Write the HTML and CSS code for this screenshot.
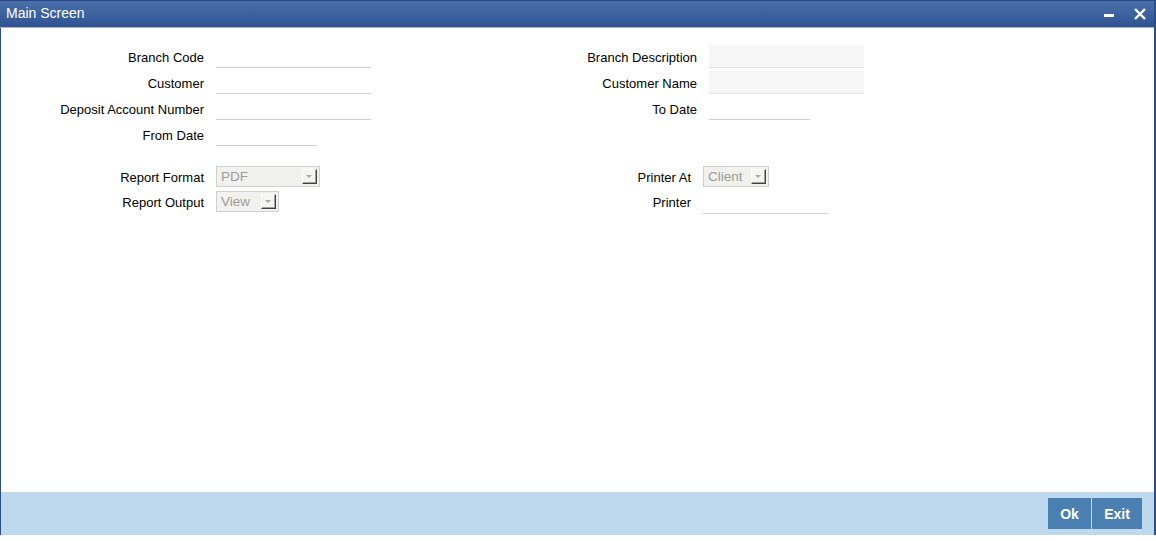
FILE: index.html
```html
<!DOCTYPE html>
<html lang="en">
<head>
    <meta charset="UTF-8">
    <title>Main Screen</title>
    <link rel="stylesheet" href="styles.css">
</head>
<body>

<div class="window">
    <div class="titlebar">
        <span class="title">Main Screen</span>
        <div class="win-buttons">
            <span class="minimize"></span>
            <svg class="close" width="12" height="12" viewBox="0 0 12 12">
                <path d="M1 1 L11 11 M11 1 L1 11" stroke="#fff" stroke-width="2.4"/>
            </svg>
        </div>
    </div>

    <div class="content">
        <div class="form-top">
            <label>Branch Code</label>
            <div class="field"><input type="text" class="text-input"></div>
            <label>Branch Description</label>
            <div class="field"><input type="text" class="text-input readonly" readonly></div>

            <label>Customer</label>
            <div class="field"><input type="text" class="text-input"></div>
            <label>Customer Name</label>
            <div class="field"><input type="text" class="text-input readonly" readonly></div>

            <label>Deposit Account Number</label>
            <div class="field"><input type="text" class="text-input"></div>
            <label>To Date</label>
            <div class="field"><input type="text" class="text-input date"></div>

            <label>From Date</label>
            <div class="field"><input type="text" class="text-input date"></div>
            <span></span>
            <span></span>
        </div>

        <div class="form-bottom">
            <label>Report Format</label>
            <div class="field">
                <div class="select wide"><span>PDF</span><span class="arrow"></span></div>
            </div>
            <label>Printer At</label>
            <div class="field">
                <div class="select client"><span>Client</span><span class="arrow"></span></div>
            </div>

            <label>Report Output</label>
            <div class="field">
                <div class="select"><span>View</span><span class="arrow"></span></div>
            </div>
            <label>Printer</label>
            <div class="field"><input type="text" class="text-input printer"></div>
        </div>
    </div>

    <div class="footer">
        <button class="btn ok">Ok</button>
        <button class="btn exit">Exit</button>
    </div>
</div>

</body>
</html>
```

FILE: styles.css
```css
body {
    margin: 0;
    background: #fff;
    font-family: Arial, "Liberation Sans", sans-serif;
    font-size: 13px;
    color: #000;
}
.window {
    width: 1156px;
    height: 535px;
    box-sizing: border-box;
    border-left: 1px solid #2c4c88;
    border-right: 2px solid #2c4c88;
    display: flex;
    flex-direction: column;
}
.titlebar {
    height: 28px;
    box-sizing: border-box;
    border-top: 1px solid #2a4a86;
    border-bottom: 1px solid #a9b6c8;
    background: linear-gradient(#4a70ab, #2f5391);
    display: flex;
    align-items: center;
    justify-content: space-between;
    padding: 0 8px 0 6px;
    margin-left: -1px;
}
.title {
    color: #fff;
    font-size: 14px;
    margin-top: -2px;
}
.win-buttons {
    display: flex;
    align-items: center;
    gap: 20px;
    margin-top: -1px;
}
.minimize {
    display: block;
    width: 10px;
    height: 3px;
    background: #fff;
    margin-top: 3px;
}
.content {
    flex: 1;
    padding-top: 17px;
}
.form-top {
    display: grid;
    grid-template-columns: 203px 155px 314px 155px;
    column-gap: 12px;
    grid-auto-rows: 26px;
}
.form-top label,
.form-bottom label {
    text-align: right;
    line-height: 22px;
    padding-top: 2px;
    white-space: nowrap;
}
.form-bottom label {
    padding-top: 1px;
}
.text-input {
    display: block;
    width: 155px;
    height: 23px;
    box-sizing: border-box;
    border: none;
    border-bottom: 1px solid #d0d0d0;
    background: #fff;
    padding: 0 3px;
    font: inherit;
    outline: none;
}
.text-input.readonly {
    background: #f6f6f6;
    border-bottom-color: #e4e4e4;
}
.text-input.date {
    width: 101px;
}
.text-input.printer {
    width: 125px;
}
.form-bottom {
    display: grid;
    grid-template-columns: 203px 103px 360px 155px;
    column-gap: 12px;
    grid-auto-rows: 25px;
    margin-top: 17px;
}
.select {
    display: flex;
    align-items: center;
    justify-content: space-between;
    width: 63px;
    height: 21px;
    box-sizing: border-box;
    border: 1px solid #cfcfcf;
    background: #f1f1ed;
    color: #9c9c9c;
    font-size: 13.5px;
    padding: 0 2px 0 4px;
}
.select.wide {
    width: 104px;
}
.select.client {
    width: 66px;
}
.arrow {
    position: relative;
    width: 15px;
    height: 15px;
    box-sizing: border-box;
    background: #f4f4f2;
    border-top: 1px solid #fff;
    border-left: 1px solid #fff;
    border-right: 1px solid #404040;
    border-bottom: 1px solid #404040;
    box-shadow: inset -1px -1px 0 #a0a0a0;
}
.arrow::after {
    content: "";
    position: absolute;
    left: 3px;
    top: 5px;
    border-left: 3px solid transparent;
    border-right: 3px solid transparent;
    border-top: 3px solid #a8a8a8;
}
.footer {
    height: 43px;
    background: #bed9ed;
    display: flex;
    justify-content: flex-end;
    align-items: flex-start;
    padding: 6px 12px 0 0;
    box-sizing: border-box;
    gap: 1px;
}
.btn {
    height: 31px;
    border: none;
    background: #4a80b1;
    color: #fff;
    font-family: Arial, "Liberation Sans", sans-serif;
    font-size: 14px;
    font-weight: bold;
    padding: 0;
    cursor: pointer;
}
.btn.ok {
    width: 43px;
}
.btn.exit {
    width: 50px;
}
```
